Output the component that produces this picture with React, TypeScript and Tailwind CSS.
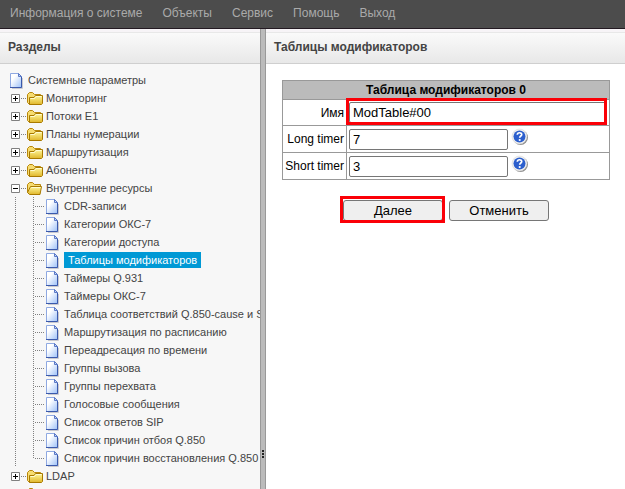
import React from "react";

const menu = ["Информация о системе", "Объекты", "Сервис", "Помощь", "Выход"];

const foldersBefore = ["Мониторинг", "Потоки E1", "Планы нумерации", "Маршрутизация", "Абоненты"];

const resources = [
  "CDR-записи",
  "Категории ОКС-7",
  "Категории доступа",
  "Таблицы модификаторов",
  "Таймеры Q.931",
  "Таймеры ОКС-7",
  "Таблица соответствий Q.850-cause и S",
  "Маршрутизация по расписанию",
  "Переадресация по времени",
  "Группы вызова",
  "Группы перехвата",
  "Голосовые сообщения",
  "Список ответов SIP",
  "Список причин отбоя Q.850",
  "Список причин восстановления Q.850",
];

function FileIcon() {
  return (
    <svg width="18" height="18" viewBox="0 0 18 18" className="shrink-0" aria-hidden="true">
      <defs>
        <linearGradient id="page" x1="0" y1="0" x2="1" y2="1">
          <stop offset="0.3" stopColor="#ffffff" />
          <stop offset="1" stopColor="#9cc0f8" />
        </linearGradient>
      </defs>
      <path d="M4 17.5H14.5V7" fill="none" stroke="#c9c9cf" />
      <path d="M2.5 2.5H10.5L13.5 5.5V16.5H2.5Z" fill="url(#page)" stroke="#8fa9e2" />
      <path d="M13.5 6V16.5H2" fill="none" stroke="#3a59ac" />
      <path d="M10.5 2.5V5.5H13.5Z" fill="#c5d8fb" stroke="#5b79c6" />
    </svg>
  );
}

function FolderIcon({ open = false }: { open?: boolean }) {
  return (
    <svg width="18" height="18" viewBox="0 0 18 18" className="shrink-0" aria-hidden="true">
      <defs>
        <linearGradient id="folder" x1="0" y1="0" x2="0" y2="1">
          <stop offset="0" stopColor="#fff89c" />
          <stop offset="1" stopColor="#e0b62a" />
        </linearGradient>
      </defs>
      {open ? (
        <>
          <path d="M1.500 13.500V5.500L3.500 3.500H6.500L8.500 5.500H14.500V8.500" fill="#f6dc70" stroke="#b8860b" />
          <path d="M4.500 7.500H15.500L14 15.500H3.500L1.500 13.500Z" fill="url(#folder)" stroke="#a87900" />
          <path d="M5.500 8.500H14.500" stroke="#fffbd0" />
        </>
      ) : (
        <>
          <path d="M1.500 13.500V5.500L3.500 3.500H6.500L8.500 5.500H14.500V7L3.500 15.500Z" fill="#f6dc70" stroke="#b8860b" />
          <path d="M3.500 8.500H8L9.500 6.500H16.500V14.500L15.500 15.500H3.500Z" fill="url(#folder)" stroke="#a87900" />
          <path d="M4.500 9.500H8.500L10 7.500H15.500" fill="none" stroke="#fffbd0" />
        </>
      )}
    </svg>
  );
}

function Toggle({ open = false, label }: { open?: boolean; label: string }) {
  return (
    <button type="button" aria-label={label} aria-expanded={open} className="h-[18px] w-[18px] shrink-0">
      <svg width="18" height="18" viewBox="0 0 18 18" aria-hidden="true" className="block">
        <path d="M3.500 5.500H11.500V13.500H3.500Z" fill="#fff" stroke="#808080" />
        <path d={open ? "M5 9.500H10" : "M5 9.500H10M7.500 7V12"} stroke="#000" />
        <path d="M13 9.500H18" stroke="#808080" strokeDasharray="1 1" />
      </svg>
    </button>
  );
}

function Branch({ last = false, link = false }: { last?: boolean; link?: boolean }) {
  return (
    <svg width="18" height="18" viewBox="0 0 18 18" className="shrink-0" aria-hidden="true">
      <path d={last ? "M7.500 0V10" : "M7.500 0V18"} stroke="#808080" strokeDasharray="1 1" />
      {link && <path d="M9 9.500H18" stroke="#808080" strokeDasharray="1 1" />}
    </svg>
  );
}

function FolderRow({ name, open = false }: { name: string; open?: boolean }) {
  return (
    <div className="flex h-[18px] items-center">
      <Toggle open={open} label={name || "Раздел"} />
      <FolderIcon open={open} />
      <a href="#" className="pl-0.5">{name}</a>
    </div>
  );
}

function PanelTitle({ children }: { children: React.ReactNode }) {
  return (
    <div className="shrink-0 bg-[#f7f4f7] pt-[3px]">
      <h2 className="h-8 truncate border-t border-b border-t-[#e8e8e8] border-b-[#cfcfcf] bg-gradient-to-b from-[#fafafa] to-[#e8e8e8] px-2 text-xs leading-[28px] font-bold text-[#444]">
        {children}
      </h2>
    </div>
  );
}

function Help() {
  return (
    <button type="button" aria-label="Справка" className="mb-1 h-[18px] w-[18px] shrink-0">
      <svg width="18" height="18" viewBox="0 0 18 18" aria-hidden="true">
        <circle cx="9.500" cy="9.500" r="7.500" fill="#8b8b8b" />
        <circle cx="8.500" cy="8.500" r="7.500" fill="#f0f0f0" stroke="#d4d4d4" strokeWidth="0.500" />
        <circle cx="8.500" cy="8.500" r="6" fill="#2c5fcd" />
        <path d="M6.300 6.800C6.300 4 10.900 4.100 10.700 6.700C10.600 8 8.700 8.100 8.700 9.800" fill="none" stroke="#fff" strokeWidth="1.700" />
        <circle cx="8.700" cy="12" r="1.100" fill="#fff" />
      </svg>
    </button>
  );
}

function Timer({ id, label, value }: { id: string; label: string; value: string }) {
  return (
    <tr className="h-[27px]">
      <th scope="row" className="border border-[#999] px-0.5 text-right font-normal whitespace-nowrap">
        <label htmlFor={id}>{label}</label>
      </th>
      <td className="border border-[#999] px-0.5">
        <div className="flex items-center gap-[3px]">
          <input id={id} defaultValue={value} className="h-[21px] w-[159px] rounded-[2px] border border-[#767676] bg-white px-[3px] text-[13px]" />
          <Help />
        </div>
      </td>
    </tr>
  );
}

function Marker({ wide = false }: { wide?: boolean }) {
  return (
    <span
      className={`pointer-events-none absolute -top-1 -bottom-0.5 -left-[3px] border-3 border-[#fb0007] ${wide ? "-right-0.5" : "right-0"}`}
    />
  );
}

export default function App() {
  return (
    <div className="flex h-screen flex-col overflow-hidden bg-white font-['Liberation_Sans',Arial,sans-serif]">
      <nav className="flex h-[29px] shrink-0 gap-5 border-b border-[#231a22] bg-[#4c4c4c] px-2.5 text-xs leading-[26px] text-[#aaa]">
        {menu.map((item) => (
          <a key={item} href="#" className="whitespace-nowrap">{item}</a>
        ))}
      </nav>
      <div className="flex min-h-0 flex-1">
        <aside className="flex w-[260px] shrink-0 flex-col overflow-hidden bg-[#f7f7f7]">
          <PanelTitle>Разделы</PanelTitle>
          <div className="px-2 pt-[7px] text-[11px] leading-4 whitespace-nowrap text-[#444]">
            <div className="flex h-[18px] items-center">
              <FileIcon />
              <a href="#" className="pl-0.5">Системные параметры</a>
            </div>
            {foldersBefore.map((name) => (
              <FolderRow key={name} name={name} />
            ))}
            <FolderRow name="Внутренние ресурсы" open />
            {resources.map((name, i) => (
              <div key={name} className="flex h-[18px] items-center">
                <Branch />
                <Branch last={i === resources.length - 1} link />
                <FileIcon />
                {name === "Таблицы модификаторов" ? (
                  <a href="#" className="ml-0.5 bg-[#0099d5] px-1 text-white">{name}</a>
                ) : (
                  <a href="#" className="pl-0.5">{name}</a>
                )}
              </div>
            ))}
            <FolderRow name="LDAP" />
            <FolderRow name="" />
          </div>
        </aside>
        <div className="flex w-1.5 shrink-0 cursor-col-resize flex-col items-center gap-px border-x border-[#999] bg-[#bbb] pt-[421px]">
          <i className="size-0.5 shrink-0 bg-[#222]" />
          <i className="size-0.5 shrink-0 bg-[#222]" />
          <i className="size-0.5 shrink-0 bg-[#222]" />
        </div>
        <main className="flex min-w-0 flex-1 flex-col">
          <PanelTitle>Таблицы модификаторов</PanelTitle>
          <form className="pt-4 pr-[15px] pl-4 text-xs text-black" onSubmit={(e) => e.preventDefault()}>
            <table className="w-full border-collapse border border-[#999]">
              <thead>
                <tr className="h-[19px] bg-[#bbb]">
                  <th colSpan={2} className="border border-[#999] font-bold">Таблица модификаторов 0</th>
                </tr>
              </thead>
              <tbody>
                <tr className="h-[26px]">
                  <th scope="row" className="w-16 border border-[#999] px-0.5 text-right font-normal">
                    <label htmlFor="name">Имя</label>
                  </th>
                  <td className="border border-[#999] px-0.5">
                    <div className="relative">
                      <input id="name" defaultValue="ModTable#00" className="block h-[21px] w-full rounded-[2px] border border-[#767676] bg-white px-[3px] text-[13px]" />
                      <Marker />
                    </div>
                  </td>
                </tr>
                <Timer id="long" label="Long timer" value="7" />
                <Timer id="short" label="Short timer" value="3" />
              </tbody>
            </table>
            <div className="flex justify-center gap-1.5 pt-5 text-[13px]">
              <div className="relative">
                <button type="submit" className="block h-[21px] w-[100px] rounded-[3px] border border-[#767676] bg-[#efefef] leading-[19px]">Далее</button>
                <Marker wide />
              </div>
              <button type="button" className="h-[21px] w-[100px] rounded-[3px] border border-[#767676] bg-[#efefef] leading-[19px]">Отменить</button>
            </div>
          </form>
        </main>
      </div>
    </div>
  );
}
